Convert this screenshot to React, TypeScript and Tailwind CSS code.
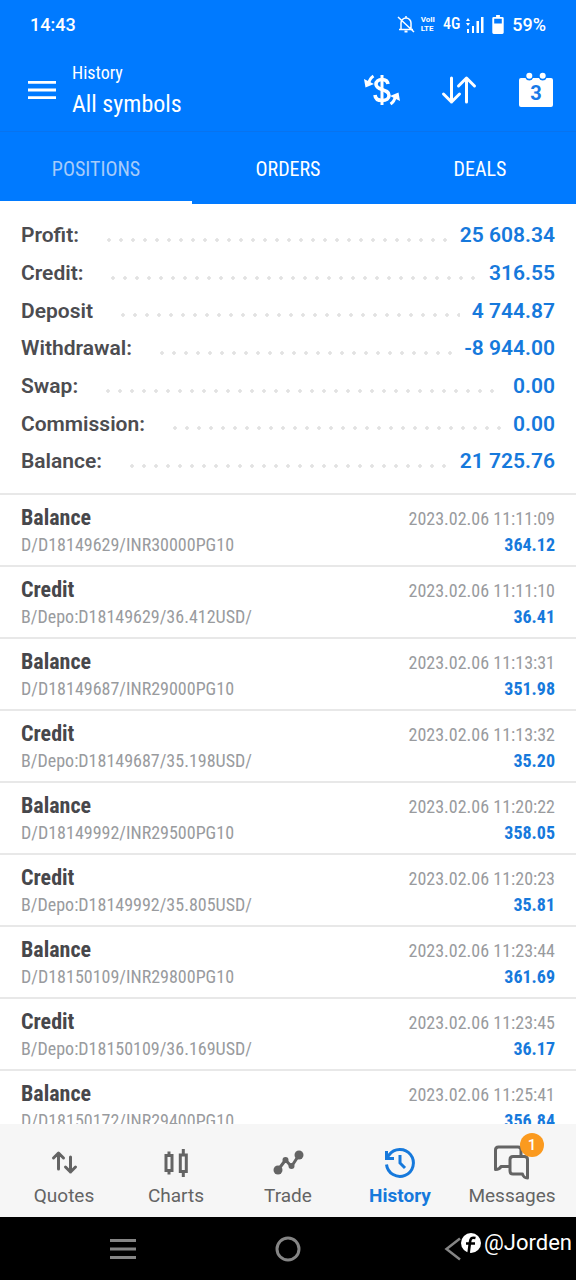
import { ReactNode } from 'react';

type Deal = {
  type: string;
  comment: string;
  time: string;
  amount: string;
};

const summary = [
  ['Profit:', '25 608.34'],
  ['Credit:', '316.55'],
  ['Deposit', '4 744.87'],
  ['Withdrawal:', '-8 944.00'],
  ['Swap:', '0.00'],
  ['Commission:', '0.00'],
  ['Balance:', '21 725.76'],
];

const deals: Deal[] = [
  { type: 'Balance', comment: 'D/D18149629/INR30000PG10', time: '2023.02.06 11:11:09', amount: '364.12' },
  { type: 'Credit', comment: 'B/Depo:D18149629/36.412USD/', time: '2023.02.06 11:11:10', amount: '36.41' },
  { type: 'Balance', comment: 'D/D18149687/INR29000PG10', time: '2023.02.06 11:13:31', amount: '351.98' },
  { type: 'Credit', comment: 'B/Depo:D18149687/35.198USD/', time: '2023.02.06 11:13:32', amount: '35.20' },
  { type: 'Balance', comment: 'D/D18149992/INR29500PG10', time: '2023.02.06 11:20:22', amount: '358.05' },
  { type: 'Credit', comment: 'B/Depo:D18149992/35.805USD/', time: '2023.02.06 11:20:23', amount: '35.81' },
  { type: 'Balance', comment: 'D/D18150109/INR29800PG10', time: '2023.02.06 11:23:44', amount: '361.69' },
  { type: 'Credit', comment: 'B/Depo:D18150109/36.169USD/', time: '2023.02.06 11:23:45', amount: '36.17' },
  { type: 'Balance', comment: 'D/D18150172/INR29400PG10', time: '2023.02.06 11:25:41', amount: '356.84' },
];

function StatusBar() {
  return (
    <div className="flex h-12 items-center justify-between px-[30px] text-[18px] font-medium">
      <span>14:43</span>
      <div className="flex items-center">
        <svg width="18" height="20" viewBox="0 0 18 20" fill="none" stroke="currentColor" strokeWidth="1.5">
          <path d="M4 15V9a5 5 0 0 1 10 0v6M2 15.5h14M9 2v2M1 3l16 15" />
          <path d="M7.5 17.5h3" strokeWidth="2" />
        </svg>
        <span className="ml-1.5 flex flex-col text-[8px] font-bold leading-[9px]">
          <span>VoII</span>
          <span>LTE</span>
        </span>
        <span className="ml-2 font-['Roboto_Condensed','Liberation_Sans_Narrow',sans-serif] text-[16px]">
          4G
        </span>
        <svg className="ml-1.5" width="18" height="17" viewBox="0 0 18 17" fill="currentColor">
          <path d="M0 5l2-3 2 3zM0 7h4l-2 3zM1 13h2v4H1zM6 10h2v7H6zM10.500 5h2.500v12h-2.500zM15 1h2.500v16H15z" />
        </svg>
        <svg className="ml-2" width="12" height="19" viewBox="0 0 12 20">
          <path
            fill="currentColor"
            fillRule="evenodd"
            d="M4 0h4v2h2.500q1.500 0 1.500 1.500v15q0 1.500-1.500 1.500h-9Q0 20 0 18.500v-15Q0 2 1.500 2H4zM2 4v5h8V4z"
          />
        </svg>
        <span className="ml-2">59%</span>
      </div>
    </div>
  );
}

function TopBar() {
  return (
    <header className="flex h-[84px] items-center border-b border-[#0873ee] pl-7 pr-[22px]">
      <button type="button" aria-label="Menu">
        <svg width="28" height="20" viewBox="0 0 28 20" fill="currentColor">
          <path d="M0 1h28v2.800H0zM0 8.600h28v2.800H0zM0 16.200h28V19H0z" />
        </svg>
      </button>
      <div className="ml-4 flex-1 font-['Roboto_Condensed','Liberation_Sans_Narrow',sans-serif]">
        <div className="text-[18px] leading-7">History</div>
        <h1 className="text-[24px] leading-[34px]">All symbols</h1>
      </div>
      <div className="flex items-center gap-[41px]">
        <button type="button" aria-label="Currency">
          <svg width="36" height="34" viewBox="0 0 36 34" fill="none" stroke="currentColor">
            <path
              strokeWidth="3.600"
              d="M24 11c-.4-3-2.800-4.500-6-4.500-3.600 0-6 1.900-6 4.700 0 6.600 13 4.200 13 11.200 0 3-2.600 5.100-6.800 5.100-4.300 0-6.900-2.200-7.200-5.500"
            />
            <path strokeWidth="3" d="M18 2v30" />
            <path strokeWidth="3" d="M4.500 11q1-5.500 5-8M31.500 23q-1 5.500-5 8" />
            <path fill="currentColor" stroke="none" d="M0 6l1.500 8.500L10 11zM36 28l-1.500-8.500L26 23z" />
          </svg>
        </button>
        <button type="button" aria-label="Sort">
          <svg
            width="36"
            height="30"
            viewBox="0 0 36 30"
            fill="none"
            stroke="currentColor"
            strokeWidth="3"
            strokeLinecap="round"
            strokeLinejoin="round"
          >
            <path d="M10.500 3v24M2.500 19l8 8 8-8M25.500 27V3M17.500 11l8-8 8 8" />
          </svg>
        </button>
        <button type="button" className="flex" aria-label="Period">
          <svg width="36" height="36" viewBox="0 0 36 36">
            <path
              fill="currentColor"
              d="M3 6h4.500a4 4 0 0 0 7.500 0h6a4 4 0 0 0 7.500 0H33q2 0 2 2v25q0 2-2 2H3q-2 0-2-2V8q0-2 2-2z"
            />
            <circle cx="11.300" cy="3.800" r="3" fill="currentColor" />
            <circle cx="24.700" cy="3.800" r="3" fill="currentColor" />
            <text x="18" y="28" textAnchor="middle" className="fill-[#1679e8] text-[20px] font-bold">
              3
            </text>
          </svg>
        </button>
      </div>
    </header>
  );
}

function Tabs() {
  return (
    <div
      role="tablist"
      className="grid h-[72px] grid-cols-3 font-['Roboto_Condensed','Liberation_Sans_Narrow',sans-serif] text-[20px]"
    >
      <button type="button" role="tab" aria-selected="true" className="border-b-3 border-white pt-1">
        <span className="text-[#a6cbfa]">POSITIONS</span>
      </button>
      <button type="button" role="tab" aria-selected="false" className="pt-px">
        ORDERS
      </button>
      <button type="button" role="tab" aria-selected="false" className="pt-px">
        DEALS
      </button>
    </div>
  );
}

function DealRow({ deal }: { deal: Deal }) {
  return (
    <li className="flex h-[72px] items-start justify-between border-t-2 border-[#e8e8e8] px-[21px] pt-2 font-['Roboto_Condensed','Liberation_Sans_Narrow',sans-serif] text-[18px]">
      <div>
        <div className="text-[22px] font-bold leading-[30px] text-[#47474b]">{deal.type}</div>
        <div className="leading-6 text-[#999b9e]">{deal.comment}</div>
      </div>
      <div className="text-right">
        <div className="pt-0.5 leading-7 text-[#999b9e]">{deal.time}</div>
        <div className="font-bold leading-6 text-[#1679dc]">{deal.amount}</div>
      </div>
    </li>
  );
}

type NavItemProps = {
  label: string;
  active?: boolean;
  badge?: string;
  children: ReactNode;
};

function NavItem({ label, active, badge, children }: NavItemProps) {
  return (
    <a
      href="#"
      className={
        active
          ? 'flex flex-1 flex-col items-center font-bold text-[#1679dc]'
          : 'flex flex-1 flex-col items-center text-[#646464]'
      }
    >
      <span className="relative">
        <svg
          className="block"
          width="40"
          height="40"
          viewBox="0 0 40 40"
          fill="none"
          stroke="currentColor"
          strokeWidth="3"
        >
          {children}
        </svg>
        {badge && (
          <span className="absolute -right-3 -top-2.5 flex size-6 items-center justify-center rounded-full bg-[#fb9a1f] text-[15px] font-medium text-white">
            {badge}
          </span>
        )}
      </span>
      <span className="text-[19px] leading-[26px]">{label}</span>
    </a>
  );
}

function BottomNav() {
  return (
    <nav className="flex h-[93px] shrink-0 bg-[#f6f6f6] px-2 pt-[19px]">
      <NavItem label="Quotes">
        <path
          strokeLinecap="round"
          strokeLinejoin="round"
          d="M14.500 26V11M9.500 15l5-5 5 5M26.500 14v15M21.500 24l5 5 5-5"
        />
      </NavItem>
      <NavItem label="Charts">
        <path d="M10 12.500h6v15h-6zM24.300 12h6v16.500h-6z" />
        <path d="M13 8.500v4M13 28v3.500M27.300 6v6M27.300 29v5" />
      </NavItem>
      <NavItem label="Trade">
        <path d="M10 27l7.500-10 6 6.500 7.500-11.500" strokeLinejoin="round" />
        <g fill="currentColor" stroke="none">
          <circle cx="10" cy="27" r="4.500" />
          <circle cx="17.500" cy="17" r="3" />
          <circle cx="23.500" cy="23" r="3" />
          <circle cx="31" cy="12" r="4.500" />
        </g>
      </NavItem>
      <NavItem label="History" active>
        <path d="M6.500 21.500a13.500 13.500 0 1 0 2.500-9.500l-2 3M6.500 8v7.500H14" />
        <path d="M20 12v8l5 5" />
      </NavItem>
      <NavItem label="Messages" badge="1">
        <path
          strokeLinejoin="round"
          d="M17 23.500h-8q-1.500 3-5.500 3V7q0-3 3-3H26q3 0 3 3v6"
        />
        <path strokeLinejoin="round" d="M21 13.500h11.500q3 0 3 3V35q-4 0-5-4H21q-3 0-3-3V16.500q0-3 3-3z" />
      </NavItem>
    </nav>
  );
}

function SystemBar() {
  return (
    <div className="relative flex h-[63px] shrink-0 items-center justify-between bg-black px-[110px] text-[#858585]">
      <button type="button" aria-label="Recent apps">
        <svg width="26" height="20" viewBox="0 0 26 20" fill="currentColor">
          <path d="M0 0h26v3H0zM0 8.500h26v3H0zM0 17h26v3H0z" />
        </svg>
      </button>
      <button type="button" aria-label="Home">
        <svg width="26" height="26" viewBox="0 0 26 26" fill="none" stroke="currentColor" strokeWidth="3">
          <circle cx="13" cy="13" r="11" />
        </svg>
      </button>
      <button type="button" aria-label="Back">
        <svg width="26" height="24" viewBox="0 0 26 24" fill="none" stroke="currentColor" strokeWidth="2.500">
          <path d="M20 1.500L6.500 12 20 22.500" />
        </svg>
      </button>
      <div className="absolute right-1 top-3 flex items-center gap-[3px] text-[22px] leading-7 text-white">
        <svg width="20" height="22" viewBox="0 0 20 22">
          <circle cx="10" cy="11" r="10" fill="currentColor" />
          <path
            d="M14.500 6c-4-1-5 .5-5.500 4L7.500 22M5 11.500h9"
            fill="none"
            stroke="#000"
            strokeWidth="2.600"
          />
        </svg>
        @Jorden
      </div>
    </div>
  );
}

function App() {
  return (
    <div className="flex h-screen flex-col overflow-hidden bg-white font-['Roboto',sans-serif]">
      <div className="shrink-0 bg-[#007aff] text-white">
        <StatusBar />
        <TopBar />
        <Tabs />
      </div>
      <main className="flex-1 overflow-hidden">
        <dl className="grid h-[289px] auto-rows-fr px-[21px] pb-3 pt-[13px] text-[21px] font-semibold">
          {summary.map(([label, value]) => (
            <div key={label} className="flex items-center">
              <dt className="text-[#4c4c50]">{label}</dt>
              <div className="ml-6 mr-3 mt-2 h-1 flex-1 bg-[radial-gradient(circle,#e2e2e2_1.5px,transparent_2px)] bg-[length:12px_4px]" />
              <dd className="text-[#1679dc]">{value}</dd>
            </div>
          ))}
        </dl>
        <ul>
          {deals.map((deal) => (
            <DealRow key={deal.time} deal={deal} />
          ))}
        </ul>
      </main>
      <BottomNav />
      <SystemBar />
    </div>
  );
}

export default App;
